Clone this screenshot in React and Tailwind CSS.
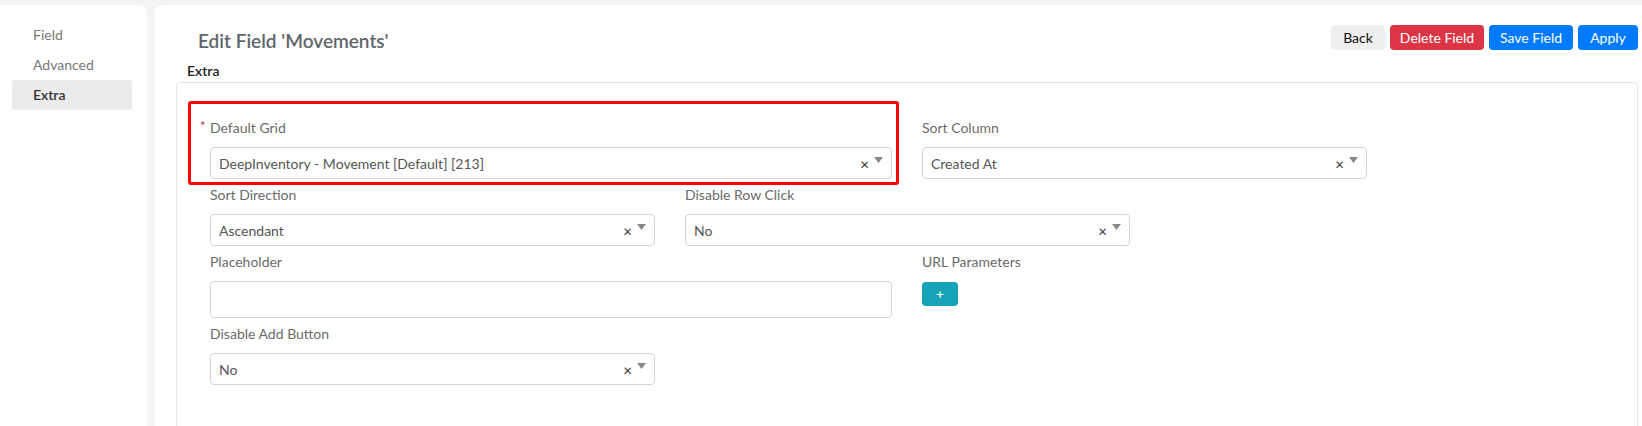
import React from "react";

// Side navigation for the field editor
const tabs = [
  { key: "field", label: "Field" },
  { key: "advanced", label: "Advanced" },
  { key: "extra", label: "Extra" },
];

const SelectBox = ({ value }) => (
  <div className="flex items-center h-[32px] border border-[#d5d5d5] rounded-[4px] bg-white pl-[8px] pr-[8px]">
    <span className="flex-1 text-[14px] text-[#555] truncate">{value}</span>
    <span className="text-[15px] leading-none text-[#333] mr-[5px] mt-[2px]">×</span>
    <svg width="9" height="6" viewBox="0 0 9 6" className="mb-[6px]">
      <path d="M0 0 L9 0 L4.5 6 Z" fill="#888" />
    </svg>
  </div>
);

const Label = ({ children, required }) => (
  <label className="relative block h-[20px] leading-[20px] text-[14px] text-[#6b6b6b] mb-[9px]">
    {required && (
      <span className="absolute left-[-10px] top-[-2px] text-[13px] text-[#b03a48]">*</span>
    )}
    {children}
  </label>
);

const App = () => {
  const active = "extra";

  return (
    <div
      className="flex gap-[8px] w-full h-[426px] pt-[5px] bg-[#f3f4f6] overflow-hidden"
      style={{ fontFamily: "Lato, 'Open Sans', sans-serif" }}
    >
      {/* Left menu */}
      <div className="w-[147px] shrink-0 bg-white rounded-tr-[8px] pt-[15px] pl-[12px] pr-[15px]">
        {tabs.map((t) => (
          <div
            key={t.key}
            className={`h-[30px] leading-[30px] pl-[21px] rounded-[3px] text-[14px] ${
              t.key === active ? "bg-[#ebebeb] font-semibold text-[#333]" : "text-[#777]"
            }`}
          >
            {t.label}
          </div>
        ))}
      </div>

      {/* Editor */}
      <div className="flex-1 bg-white rounded-tl-[8px] pt-[20px] pl-[21px] pr-[4px]">
        <div className="flex justify-between items-start h-[36px]">
          <h2 className="ml-[22px] mt-[4px] text-[19px] leading-[24px] font-semibold text-[#60656b]">
            Edit Field 'Movements'
          </h2>
          <div className="flex gap-[5px] text-[14px]">
            <button className="h-[25px] w-[54px] rounded-[4px] bg-[#efefef] text-[#111]">Back</button>
            <button className="h-[25px] w-[94px] rounded-[4px] bg-[#dc3545] text-white">Delete Field</button>
            <button className="h-[25px] w-[84px] rounded-[4px] bg-[#007bff] text-white">Save Field</button>
            <button className="h-[25px] w-[60px] rounded-[4px] bg-[#007bff] text-white">Apply</button>
          </div>
        </div>

        <div className="ml-[11px] h-[21px] leading-[20px] text-[14px] font-semibold text-[#222]">Extra</div>

        <div className="h-[400px] border border-[#e4e4e4] rounded-[4px] pt-[35px] pl-[18px]">
          <div className="flex flex-wrap w-[1425px]">
            {/* Default grid */}
            <div className="w-[712px] px-[15px] mb-[6px]">
              <div className="relative">
                <div className="absolute left-[-22px] right-[-7px] top-[-17px] bottom-[-6px] border-[3px] border-[#ff0000] rounded-[3px] pointer-events-none" />
                <Label required>Default Grid</Label>
                <SelectBox value="DeepInventory - Movement [Default] [213]" />
              </div>
            </div>
            <div className="w-[475px] px-[15px] mb-[6px]">
              <Label>Sort Column</Label>
              <SelectBox value="Created At" />
            </div>

            <div className="w-[475px] px-[15px] mb-[6px]">
              <Label>Sort Direction</Label>
              <SelectBox value="Ascendant" />
            </div>
            <div className="w-[475px] px-[15px] mb-[6px]">
              <Label>Disable Row Click</Label>
              <SelectBox value="No" />
            </div>
            <div className="w-[475px]" />

            <div className="w-[712px] px-[15px] mb-[6px]">
              <Label>Placeholder</Label>
              <input
                type="text"
                className="block w-full h-[37px] border border-[#d5d5d5] rounded-[4px] px-[8px] text-[14px] outline-none"
              />
            </div>
            <div className="w-[475px] px-[15px] mb-[6px]">
              <Label>URL Parameters</Label>
              <button className="w-[36px] h-[24px] rounded-[4px] bg-[#17a2b8] text-white text-[14px] leading-none">
                +
              </button>
            </div>

            <div className="w-[475px] px-[15px] mb-[6px]">
              <Label>Disable Add Button</Label>
              <SelectBox value="No" />
            </div>
          </div>
        </div>
      </div>
    </div>
  );
};

export default App;
